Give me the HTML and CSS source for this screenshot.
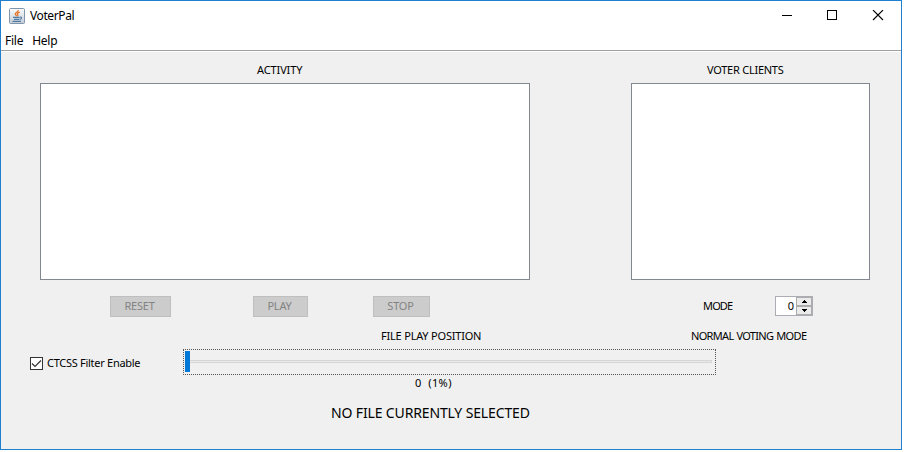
FILE: index.html
```
<!DOCTYPE html>
<html lang="en">
<head>
<meta charset="utf-8">
<title>VoterPal</title>
<link rel="stylesheet" href="styles.css">
</head>
<body>
<div class="window">
  <header class="titlebar">
    <svg class="app-icon" width="16" height="16" viewBox="0 0 16 16">
      <defs><linearGradient id="g" x1="0" y1="0" x2="0" y2="1"><stop offset="0" stop-color="#fafbfc"/><stop offset="1" stop-color="#c3cdd7"/></linearGradient></defs>
      <rect x=".5" y=".5" width="15" height="15" rx="1" fill="url(#g)" stroke="#7f95aa"/>
      <path d="M9.200 2C9.600 4 6 4.300 6.300 6C6.500 7 7.500 7.300 7.600 8.300M10.800 4.200C8.500 4.800 7.900 5.600 8.700 6.600C9.200 7.200 8.900 7.800 8.500 8.200" fill="none" stroke="#e5772d" stroke-width="1.300"/>
      <path d="M4 9.400H10.500M5 11.400H10M3.500 13.400H12M10.800 9.200C13.300 8.400 13.200 11 10.500 11.400" fill="none" stroke="#4f7ba5" stroke-width="1.100"/>
    </svg>
    <span class="title">VoterPal</span>
    <svg class="controls" width="102" height="12" viewBox="0 0 102 12" fill="none" stroke="#000">
      <path d="M0 5.500H10"/><rect x="45.500" y=".5" width="9" height="9"/><path d="M91 0L101 10M101 0L91 10" stroke-width="1.100"/>
    </svg>
  </header>
  <nav class="menubar"><span>File</span><span>Help</span></nav>
  <main>
    <div class="row headings"><span class="label activity">ACTIVITY</span><span class="label clients">VOTER CLIENTS</span></div>
    <div class="row panels"><div class="panel log"></div><div class="panel list"></div></div>
    <div class="row actions">
      <div class="btn reset"><span>RESET</span></div>
      <div class="btn play"><span>PLAY</span></div>
      <div class="btn stop"><span>STOP</span></div>
      <span class="label mode">MODE</span>
      <div class="spinner"><span class="num">0</span><div class="arrows">
        <div class="arrow"><svg width="7" height="4" viewBox="0 0 7 4"><path d="M3 0H4V1H5V2H6V3H1V2H2V1H3Z"/></svg></div>
        <div class="arrow"><svg width="7" height="4" viewBox="0 0 7 4"><path d="M1 0H6V1H5V2H4V3H3V2H2V1H1Z"/></svg></div>
      </div></div>
    </div>
    <div class="row captions"><span class="label position">FILE PLAY POSITION</span><span class="label voting">NORMAL VOTING MODE</span></div>
    <div class="row seek">
      <svg width="13" height="13" viewBox="0 0 13 13"><rect x=".5" y=".5" width="12" height="12" fill="#fff" stroke="#333"/><path d="M2 6.500L5 9.500L11 3.500" fill="none" stroke="#333" stroke-width="1.200"/></svg>
      <span class="label ctcss">CTCSS Filter Enable</span>
      <div class="slider"><div class="thumb"></div><div class="track"></div></div>
    </div>
    <div class="row value"><span class="label percent">0&nbsp; (1%)</span></div>
    <div class="row status"><span class="label nofile">NO FILE CURRENTLY SELECTED</span></div>
  </main>
</div>
</body>
</html>
```
FILE: styles.css
```
* { box-sizing: border-box; }
body { margin: 0; background: #fff; color: #000; font: 11px/14px "Noto Sans", sans-serif; }
.window { width: 902px; height: 450px; border: 1px solid #1e80cf; background: #fff; }
.titlebar { display: flex; height: 30px; padding: 7px 17px 0 8px; }
.app-icon { flex: none; }
.title { margin: 0 auto 0 5px; font-size: 12px; line-height: 16px; letter-spacing: -.4px; }
.controls { margin-top: 2px; }
.menubar { display: flex; gap: 9px; height: 19px; padding: 2px 0 0 4px; font-size: 12px; line-height: 16px; letter-spacing: -.25px; }
main { height: 399px; border-top: 1px solid #a0a0a0; box-shadow: inset 0 1px #fff; background: #f0f0f0; }
.row { display: flex; }
.label { white-space: nowrap; flex: none; }
.headings { height: 32px; padding-top: 12px; }
.activity { width: 46px; margin-left: 256px; letter-spacing: -.12px; }
.clients { margin-left: 404px; letter-spacing: -.25px; }
.panels { height: 197px; padding-left: 39px; gap: 101px; }
.panel { border: 1px solid #828790; background: #fff; }
.log { width: 490px; }
.list { width: 239px; }
.actions { height: 37px; padding-top: 16px; }
.btn { height: 21px; border: 1px solid #bfbfbf; background: #ccc; color: #838383; line-height: 18px; text-align: center; letter-spacing: -.2px; padding-right: 2px; }
.reset { width: 61px; margin-left: 109px; }
.play { width: 55px; margin-left: 82px; }
.stop { width: 57px; margin-left: 65px; }
.mode { width: 30px; margin: 3px 0 0 273px; letter-spacing: -.85px; }
.spinner { display: flex; width: 38px; height: 20px; margin-left: 42px; border: 1px solid #abadb3; background: #fff; }
.num { width: 20px; text-align: right; padding-right: 2px; line-height: 18px; }
.arrows { width: 16px; background: #f0f0f0; }
.arrow { display: flex; justify-content: center; align-items: center; height: 9px; border: 1px solid #acacac; background: #ebebeb; }
.captions { height: 32px; padding-top: 12px; }
.position { width: 101px; margin-left: 380px; letter-spacing: -.2px; }
.voting { margin-left: 209px; letter-spacing: -.68px; word-spacing: .8px; }
.seek { height: 26px; padding-left: 29px; }
.seek > svg { margin-top: 8px; flex: none; }
.ctcss { width: 94px; margin: 7px 0 0 4px; letter-spacing: -.28px; }
.slider { display: flex; width: 533px; height: 26px; margin-left: 42px; padding: 2px 3px 2px 1px; border: 1px dotted #555; }
.thumb { flex: none; width: 5px; height: 21px; background: #0078d7; margin-top: -1px; }
.track { flex: 1; height: 3px; margin-top: 8px; border: 1px solid #d6d6d6; background: #e7eaea; border-left: 0; }
.value { height: 22px; padding-top: 1px; }
.percent { margin-left: 414px; letter-spacing: .4px; }
.status { padding-top: 7px; }
.nofile { margin-left: 330px; font-size: 14px; line-height: 18px; letter-spacing: -.14px; }
```
